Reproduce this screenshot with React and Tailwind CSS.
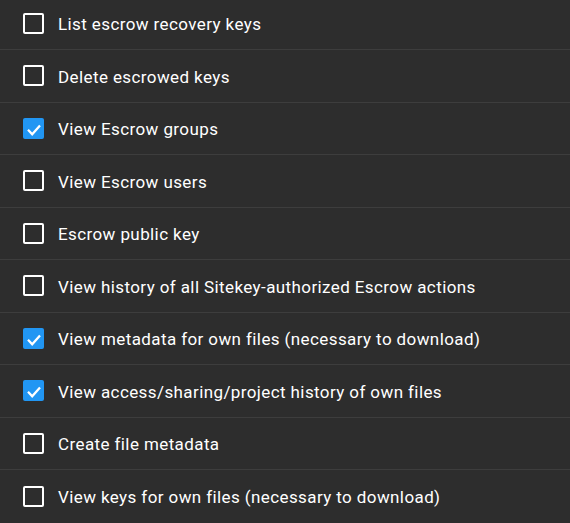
import React, { useState } from "react";

const PERMISSIONS = [
  { label: "List escrow recovery keys", checked: false },
  { label: "Delete escrowed keys", checked: false },
  { label: "View Escrow groups", checked: true },
  { label: "View Escrow users", checked: false },
  { label: "Escrow public key", checked: false },
  { label: "View history of all Sitekey-authorized Escrow actions", checked: false },
  { label: "View metadata for own files (necessary to download)", checked: true },
  { label: "View access/sharing/project history of own files", checked: true },
  { label: "Create file metadata", checked: false },
  { label: "View keys for own files (necessary to download)", checked: false },
];

const Checkbox = ({ checked }) =>
  checked ? (
    <span className="block h-[21px] w-[21px] shrink-0 rounded-[2px] bg-[#2196f3]">
      <svg viewBox="0 0 21 21" className="h-[21px] w-[21px]" fill="none">
        <path d="M5 11.8l4.2 4.4 7.8-8.6" stroke="white" strokeWidth="2.3" />
      </svg>
    </span>
  ) : (
    <span className="h-[21px] w-[21px] shrink-0 rounded-[2px] border-2 border-white" />
  );

export default function App() {
  const [items, setItems] = useState(PERMISSIONS);

  const toggle = (idx) => {
    setItems(items.map((it, i) => (i === idx ? { ...it, checked: !it.checked } : it)));
  };

  return (
    <div className="h-[523px] w-[570px] overflow-hidden bg-[#2d2d2d] font-['Roboto',sans-serif] text-white">
      <div className="mt-[-2.5px] flex flex-col">
        {items.map((it, i) => (
          <div
            key={it.label}
            onClick={() => toggle(i)}
            className="flex h-[52.5px] cursor-pointer items-center gap-[14px] border-b border-[#3d3d3d] pl-[23px] last:border-b-0"
          >
            <Checkbox checked={it.checked} />
            <span className="pt-[2px] text-[17px] font-normal leading-[20px] tracking-[0.4px]">{it.label}</span>
          </div>
        ))}
      </div>
    </div>
  );
}
